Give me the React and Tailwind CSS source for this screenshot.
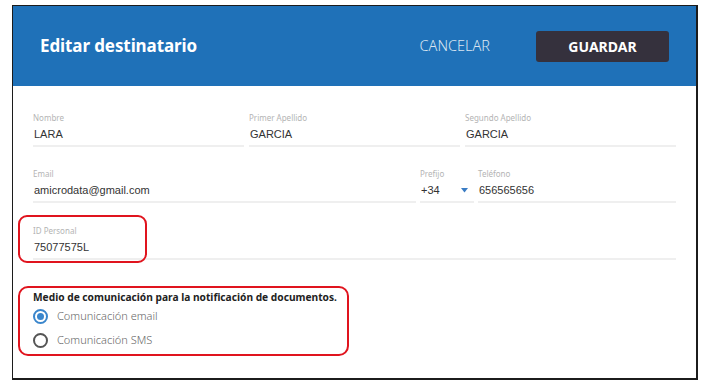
import React from 'react';

const Field = ({ label, value, className = '', children }) => (
  <div className={`flex flex-col border-b-2 border-[#efefef] pb-[4px] ${className}`}>
    <span className="h-[10px] text-[8px] leading-[10px] text-[#b4b4b4] font-['Noto_Sans',sans-serif]">
      {label}
    </span>
    <div className="mt-[4px] h-[14px] flex items-center pl-[1px] text-[11px] leading-[14px] text-[#333] font-['Liberation_Sans',Arial,sans-serif]">
      {children || value}
    </div>
  </div>
);

const Radio = ({ checked, label }) => (
  <label className="flex items-center gap-[9px] h-[16px]">
    {checked ? (
      <span className="w-[15px] h-[15px] rounded-full border-2 border-[#3a86cc] flex items-center justify-center">
        <span className="w-[7px] h-[7px] rounded-full bg-[#3a86cc]" />
      </span>
    ) : (
      <span className="w-[15px] h-[15px] rounded-full border-2 border-[#555]" />
    )}
    <span className="text-[11px] text-[#666] font-['Noto_Sans',sans-serif] font-light">{label}</span>
  </label>
);

export default function App() {
  return (
    <div className="w-[707px] h-[389px] bg-white pt-[5px] pl-[12px]">
      <div className="w-[686px] h-[375px] border border-r-2 border-b-2 border-[#1c1c1c] bg-white flex flex-col">
        {/* Header */}
        <div className="h-[80px] bg-[#1f71b8] flex items-center pl-[27px] pr-[27px]">
          <h1 className="text-[17px] font-bold text-white font-['Noto_Sans',sans-serif] tracking-[-0.1px]">
            Editar destinatario
          </h1>
          <button className="ml-auto text-[14.5px] text-[#dbe6f2] font-['Noto_Sans',sans-serif] font-light">
            CANCELAR
          </button>
          <button className="ml-[46px] w-[133px] h-[31px] rounded-[3px] bg-[#35313d] text-white text-[14px] font-bold font-['Noto_Sans',sans-serif]">
            GUARDAR
          </button>
        </div>

        {/* Form */}
        <div className="pl-[20px] pr-[20px] pt-[27px] flex flex-col gap-[22px]">
          <div className="grid grid-cols-3 gap-[5px]">
            <Field label="Nombre" value="LARA" />
            <Field label="Primer Apellido" value="GARCIA" />
            <Field label="Segundo Apellido" value="GARCIA" />
          </div>
          <div className="grid grid-cols-[383px_54px_1fr] gap-[4px]">
            <Field label="Email" value="amicrodata@gmail.com" />
            <Field label="Prefijo">
              <span>+34</span>
              <svg className="ml-auto mr-[6px]" width="7" height="5" viewBox="0 0 7 5">
                <path d="M0 0h7L3.5 4.5z" fill="#3a7cc4" />
              </svg>
            </Field>
            <Field label="Teléfono" value="656565656" />
          </div>
          <div className="relative mt-[1px]">
            <Field label="ID Personal" value="75077575L" />
            <div className="absolute left-[-15px] top-[-11px] w-[129px] h-[48px] rounded-[9px] border-2 border-[#e0141e]" />
          </div>
        </div>

        {/* Comunicación */}
        <div className="ml-[5px] mt-[26px] w-[331px] h-[70px] rounded-[10px] border-2 border-[#e0141e] pl-[13px] pt-[2px]">
          <p className="text-[10.2px] font-bold text-[#222] font-['Noto_Sans',sans-serif] leading-[14px]">
            Medio de comunicación para la notificación de documentos.
          </p>
          <div className="mt-[4px] flex flex-col gap-[8px]">
            <Radio checked label="Comunicación email" />
            <Radio label="Comunicación SMS" />
          </div>
        </div>
      </div>
    </div>
  );
}
